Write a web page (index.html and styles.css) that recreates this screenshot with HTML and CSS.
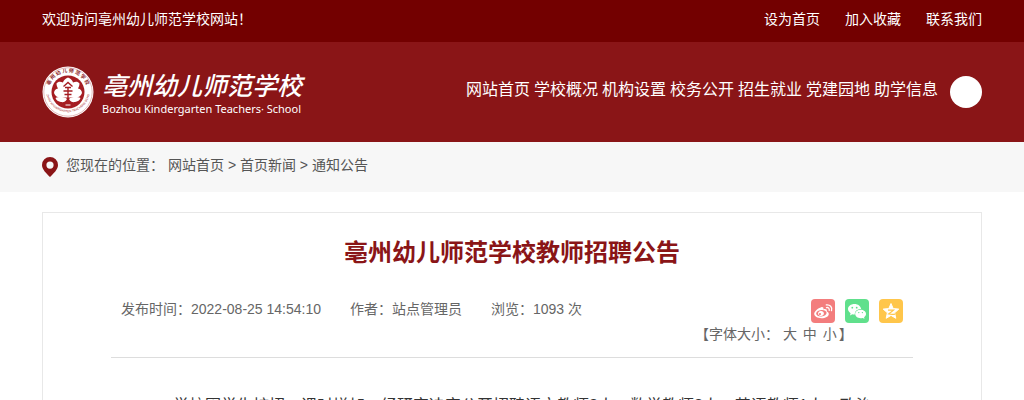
FILE: index.html
```html
<!DOCTYPE html>
<html lang="zh-CN">
<head>
<meta charset="utf-8">
<meta name="viewport" content="width=device-width, initial-scale=1">
<title>亳州幼儿师范学校教师招聘公告</title>
<link rel="stylesheet" href="styles.css">
</head>
<body>
<div class="topbar">
  <div class="wrap topbar-row">
    <span>欢迎访问亳州幼儿师范学校网站！</span>
    <nav class="top-links"><a href="#">设为首页</a><a href="#">加入收藏</a><a href="#">联系我们</a></nav>
  </div>
</div>
<header class="header">
  <div class="wrap header-row">
    <a class="logo" href="#">
      <svg class="seal" viewBox="0 0 52 52" aria-hidden="true">
        <defs>
          <path id="arc-top" d="M7.500 32A19.500 19.500 0 1 1 44.500 32"/>
          <path id="arc-bottom" d="M4.500 28A21.800 21.800 0 0 0 47.500 28"/>
        </defs>
        <circle cx="26" cy="26" r="25.500" fill="#fff"/>
        <circle cx="26" cy="26" r="24.200" fill="none" stroke="#c9787b" stroke-width=".5"/>
        <circle cx="26" cy="26" r="16.500" fill="#a51d22"/>
        <text class="seal-cn"><textPath href="#arc-top" startOffset="50%" text-anchor="middle">亳 州 幼 儿 师 范 学 校</textPath></text>
        <text class="seal-en"><textPath href="#arc-bottom" startOffset="50%" text-anchor="middle">BOZHOU KINDERGARTEN TEACHERS SCHOOL</textPath></text>
        <path fill="#fff" d="M26 11.500c3 1.300 4.500 3 5 5 3-1.500 5-1 6.500 1-.1 2-.6 3.500-1.500 5 2.500.5 3.800 2 4 4.500-1 3-3.500 4.500-6.500 4.500h-15c-3 0-5.500-1.500-6.500-4.500.2-2.500 1.500-4 4-4.500-.9-1.500-1.400-3-1.500-5 1.500-2 3.500-2.500 6.500-1 .5-2 2-3.700 5-5z"/>
        <path fill="#fff" d="M13.500 32c3-1.500 9-1.300 11.500 1-1.500 2.700-3.500 3.500-6 3-2.500-.3-5-1.700-5.500-4zM38.500 32c-3-1.500-9-1.300-11.500 1 1.500 2.700 3.500 3.500 6 3 2.500-.3 5-1.700 5.500-4z"/>
        <path fill="none" stroke="#a51d22" stroke-width="1.400" d="M21.500 20.500l4.500-4 4.500 4M23 21.500h6M21.500 25h9M22.500 28.500h7M26 21.500V34"/>
        <path d="M23.500 39h5" stroke="#fff"/>
      </svg>
      <span class="logo-text"><span class="logo-cn">亳州幼儿师范学校</span><span class="logo-en">Bozhou Kindergarten Teachers· School</span></span>
    </a>
    <div class="header-side">
      <nav class="main-nav"><a href="#">网站首页</a><a href="#">学校概况</a><a href="#">机构设置</a><a href="#">校务公开</a><a href="#">招生就业</a><a href="#">党建园地</a><a href="#">助学信息</a></nav>
      <button class="search" type="button" aria-label="搜索"></button>
    </div>
  </div>
</header>
<div class="crumb-bar">
  <div class="wrap crumb-row">
    <svg class="pin" viewBox="0 0 16 20" aria-hidden="true"><path fill="#8a1517" fill-rule="evenodd" d="M8 0a8 8 0 0 1 8 8c0 4.500-4.500 8.500-8 12-3.500-3.500-8-7.500-8-12a8 8 0 0 1 8-8zm0 4.500a3.600 3.600 0 1 0 0 7.200 3.600 3.600 0 0 0 0-7.200z"/></svg>
    <nav class="crumbs"><span class="crumb-label">您现在的位置：</span><a href="#">网站首页</a> &gt; <a href="#">首页新闻</a> &gt; <a href="#">通知公告</a></nav>
  </div>
</div>
<main class="wrap article">
  <h1 class="title">亳州幼儿师范学校教师招聘公告</h1>
  <div class="meta">
    <div class="facts"><span>发布时间：2022-08-25 14:54:10</span><span>作者：站点管理员</span><span>浏览：1093 次</span></div>
    <div class="tools">
      <div class="share">
        <a class="weibo" href="#" aria-label="微博"><svg viewBox="0 0 24 24"><path fill="#fff" fill-rule="evenodd" d="M10.200 8.200c1.500-.5 2.700.3 2.200 2.200 2.200-.8 4 .1 3.400 2 1.400.5 2 1.400 2 2.500 0 2.400-3.300 4.300-7.300 4.300S3.200 17.400 3.200 14.800c0-2.400 3.900-5.800 7-6.600zM10.400 11c-3 .2-5.300 1.900-5.200 3.800.1 1.800 2.500 3 5.400 2.700 2.900-.2 5.100-1.900 5-3.700-.1-1.800-2.400-3-5.200-2.800zM9.600 12c1.800-.3 3.300.8 3.300 2.400 0 1.400-1.400 2.500-3 2.500-1.800 0-3-1.200-2.800-2.600.1-1.100 1.200-2.100 2.500-2.300zm-.7 2.100a1 1 0 1 0 .2 2 1 1 0 0 0-.2-2z"/><path fill="none" stroke="#fff" stroke-width="1.300" stroke-linecap="round" d="M15.500 8.600c1.800-.4 3.100.9 2.700 2.700M15.300 5.900c3.700-.5 6.300 2.200 5.200 5.800"/></svg></a>
        <a class="wechat" href="#" aria-label="微信"><svg viewBox="0 0 24 24"><path fill="#fff" d="M9.500 5c3.600 0 6.300 2.200 6.600 5-3.700-.1-6.500 2.200-6.300 5.500-.8.100-1.600 0-2.400-.2L5 16.500l.6-2.200C4.100 13.200 3 11.800 3 10.100 3 7.300 5.900 5 9.500 5z"/><path fill="#fff" d="M15.600 10.800c3 0 5.400 1.900 5.400 4.200 0 1.300-.8 2.400-1.900 3.200l.4 1.600-1.900-.9c-3.900 1.100-7.400-1.100-7.400-3.900 0-2.300 2.400-4.200 5.400-4.200z"/><g fill="#60e08c"><circle cx="7.300" cy="8.700" r=".9"/><circle cx="11.700" cy="8.700" r=".9"/><circle cx="13.800" cy="13.600" r=".7"/><circle cx="17.400" cy="13.600" r=".7"/></g></svg></a>
        <a class="qzone" href="#" aria-label="QQ空间"><svg viewBox="0 0 24 24"><path fill="#fff" stroke="#fff" stroke-linejoin="round" d="M12 4.500l2.200 5.100 5.600.5-4.200 3.700 1.200 5.500-4.800-2.900-4.800 2.900 1.200-5.500-4.200-3.700 5.600-.5z"/><path fill="none" stroke="#ffc64b" stroke-width="1.200" d="M9 11.200h5.500l-4.800 3.800c2 .4 4.200.4 6.500.1"/></svg></a>
      </div>
      <div class="font-size">【字体大小： <a href="#">大</a> <a href="#">中</a> <a href="#">小</a>】</div>
    </div>
  </div>
  <div class="content"><p>学校因学生扩招，课时增加，经研究决定公开招聘语文教师2人，数学教师2人，英语教师1人，政治</p></div>
</main>
</body>
</html>
```
FILE: styles.css
```css
* { box-sizing: border-box; }
body {
  margin: 0;
  background: #fff;
  color: #555;
  font: 14px/24px "Liberation Sans", "Noto Sans CJK SC", sans-serif;
}
a { color: inherit; text-decoration: none; }
.wrap { max-width: 940px; margin: 0 auto; }
.topbar { background: #730000; color: #fff; }
.topbar-row { display: flex; justify-content: space-between; padding: 7px 0 11px; }
.top-links { display: flex; gap: 25px; }
.header { background: #8a1517; color: #fff; }
.header-row { display: flex; justify-content: space-between; padding: 24px 0; }
.logo { display: flex; gap: 8px; }
.seal { width: 52px; height: 52px; }
.seal-cn { font: bold 5px "Noto Sans CJK SC", sans-serif; fill: #8a1517; }
.seal-en { font: 3px "Liberation Sans", sans-serif; fill: #a51d22; }
.logo-text { display: flex; flex-direction: column; white-space: nowrap; }
.logo-cn { font: italic 500 25px/36px "Noto Sans CJK SC", sans-serif; }
.logo-en { font: 11px/14px "Noto Sans", sans-serif; }
.header-side { display: flex; gap: 12px; padding-top: 10px; }
.main-nav { display: flex; gap: 4px; font-size: 16px; line-height: 28px; white-space: nowrap; }
.search { width: 32px; height: 32px; padding: 0; border: 0; border-radius: 50%; background: #fff; }
.crumb-bar { background: #f7f7f7; }
.crumb-row { display: flex; gap: 8px; padding: 11px 0 15px; }
.pin { width: 16px; height: 20px; margin-top: 4px; }
.crumb-label { margin-right: 4px; }
.article { margin-top: 20px; padding: 24px 68px 0; border: 1px solid #e8e8e8; }
.title { margin: 0; color: #8a1517; font-size: 24px; line-height: 32px; text-align: center; }
.meta {
  display: flex;
  justify-content: space-between;
  margin-top: 28px;
  padding: 0 10px 12px;
  border-bottom: 1px solid #ddd;
  color: #666;
}
.facts { display: flex; gap: 29px; }
.tools { display: flex; flex-direction: column; width: 208px; padding-top: 2px; }
.share { display: flex; gap: 10px; align-self: flex-end; }
.share a { width: 24px; height: 24px; border-radius: 4px; }
.share svg { display: block; }
.weibo { background: #f37d7d; }
.wechat { background: #60e08c; }
.qzone { background: #ffc64b; }
.font-size { line-height: 22px; white-space: nowrap; }
.font-size a { margin-right: 2px; }
.content { padding: 32px 30px 0; color: #333; font-size: 16px; line-height: 32px; }
.content p { margin: 0; text-indent: 2em; }
```
